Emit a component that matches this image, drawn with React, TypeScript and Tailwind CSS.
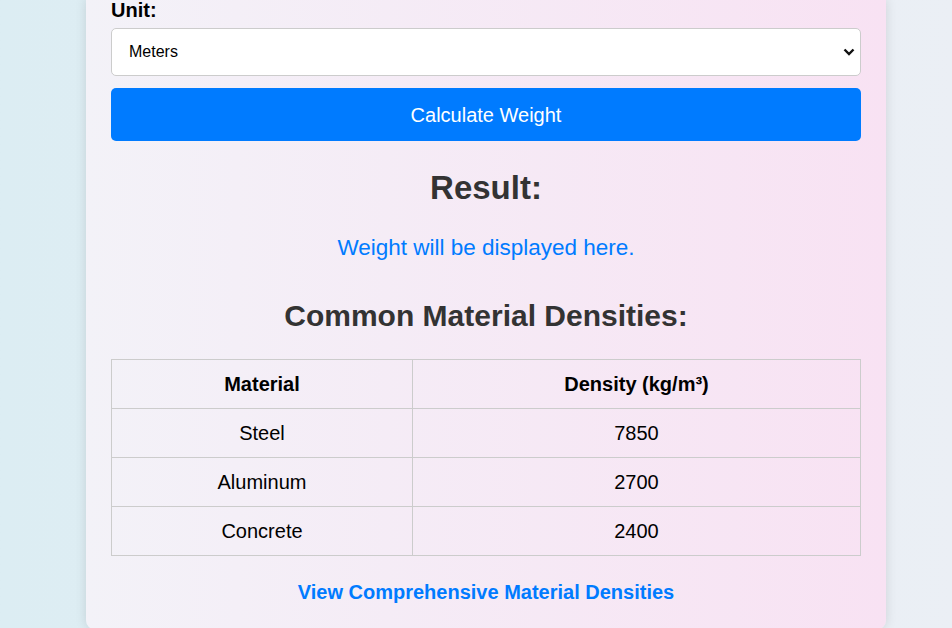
const rows = [
  { name: "Steel", density: "7850" },
  { name: "Aluminum", density: "2700" },
  { name: "Concrete", density: "2400" },
];

const App = () => {
  return (
    <div className="min-h-[628px] w-full bg-gradient-to-r from-[#dcedf3] to-[#ebeff5] font-['Liberation_Sans',Arial,sans-serif] overflow-hidden">
      <div className="ml-[86px] w-[800px] rounded-b-[10px] bg-gradient-to-r from-[#f3f2f8] to-[#f8e2f3] px-[25px] pb-[24px] shadow-[0_0_12px_rgba(0,0,0,0.12)]">
        {/* Unit select */}
        <label className="-mt-px block text-[20px] font-bold leading-[23px] text-black">
          Unit:
        </label>
        <div className="relative mt-[6px]">
          <select className="block h-[48px] w-full appearance-none rounded-[5px] border border-[#cccccc] bg-white px-[17px] text-[16px] text-black outline-none">
            <option>Meters</option>
          </select>
          <svg
            className="pointer-events-none absolute right-[6px] top-[19px]"
            width="12"
            height="10"
            viewBox="0 0 12 10"
          >
            <polyline
              points="1.5,2.5 6,7 10.5,2.5"
              fill="none"
              stroke="#111"
              strokeWidth="2.4"
            />
          </svg>
        </div>

        <button className="mt-[12px] h-[53px] w-full rounded-[5px] bg-[#007bff] text-[20px] text-white">
          Calculate Weight
        </button>

        {/* Result */}
        <h2 className="mt-[28px] text-center text-[33px] font-bold leading-[38px] text-[#333333]">
          Result:
        </h2>
        <p className="mt-[28px] text-center text-[22.5px] leading-[25px] text-[#007bff]">
          Weight will be displayed here.
        </p>

        {/* Densities table */}
        <h2 className="mt-[39px] text-center text-[30px] font-bold leading-[34px] text-[#333333]">
          Common Material Densities:
        </h2>
        <table className="mt-[26px] w-full border-collapse text-[20px] leading-[22px] text-black">
          <thead>
            <tr className="h-[49px]">
              <th className="w-[301px] border border-[#cccccc] font-bold">Material</th>
              <th className="border border-[#cccccc] font-bold">Density (kg/m³)</th>
            </tr>
          </thead>
          <tbody>
            {rows.map((r) => (
              <tr key={r.name} className="h-[49px]">
                <td className="border border-[#cccccc] text-center">{r.name}</td>
                <td className="border border-[#cccccc] text-center">{r.density}</td>
              </tr>
            ))}
          </tbody>
        </table>

        <div className="mt-[25px] text-center">
          <a href="#" className="text-[20px] font-bold leading-[23px] text-[#007bff]">
            View Comprehensive Material Densities
          </a>
        </div>
      </div>
    </div>
  );
};

export default App;
